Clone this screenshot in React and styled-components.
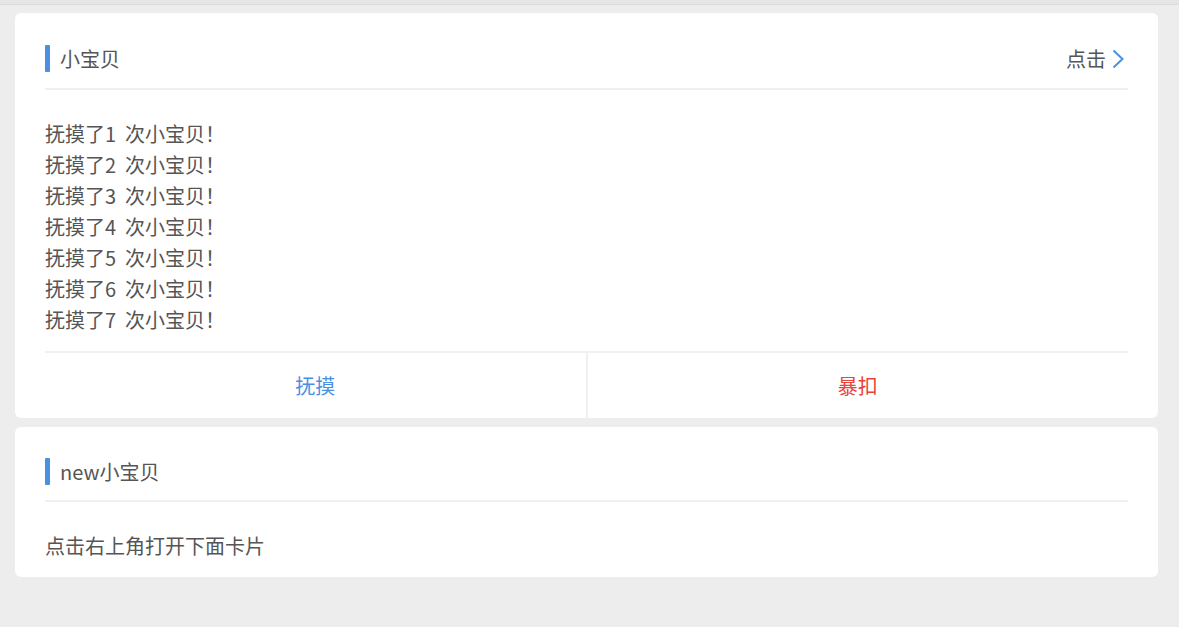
import React, { useState } from "react";
import styled, { createGlobalStyle } from "styled-components";

const GlobalStyle = createGlobalStyle`
  html, body {
    margin: 0;
    padding: 0;
    background: #ededed;
  }
  body {
    font-family: "Noto Sans CJK SC", "Noto Sans", sans-serif;
    color: #555;
  }
`;

// 페이지 전체
const Page = styled.div`
  min-height: 627px;
  box-sizing: border-box;
  border-top: 4px solid #e6e6e6;
  box-shadow: inset 0 1px 0 #dcdcdc;
  padding: 9px 21px 0 15px;
  display: flex;
  flex-direction: column;
  gap: 9px;
`;

const Card = styled.div`
  background: #fff;
  border-radius: 6px;
  padding: 0 30px;
`;

const CardHeader = styled.div`
  display: flex;
  align-items: center;
  justify-content: space-between;
  padding: 31px 0 15px;
  border-bottom: 2px solid #f0f0f0;
`;

const Title = styled.div`
  display: flex;
  align-items: center;
  height: 27px;
  font-size: 20px;
  color: #555;

  &::before {
    content: "";
    width: 5px;
    height: 27px;
    margin-right: 10px;
    border-radius: 1px;
    background: #4a90e2;
  }
`;

const MoreLink = styled.button`
  display: flex;
  align-items: center;
  gap: 6px;
  padding: 0 4px 0 0;
  border: none;
  background: none;
  font: inherit;
  font-size: 20px;
  color: #555;
  cursor: pointer;
`;

const Body = styled.div`
  padding: 28px 0 16px;
  font-size: 20px;
  line-height: 31px;
  color: #555;
`;

const Line = styled.div`
  white-space: pre;
`;

const Actions = styled.div`
  display: grid;
  grid-template-columns: 1fr 2px 1fr;
  border-top: 2px solid #f0f0f0;
  height: 65px;
`;

const Sep = styled.div`
  background: #f0f0f0;
`;

const ActionButton = styled.button`
  border: none;
  background: none;
  font: inherit;
  font-size: 20px;
  color: ${({ danger }) => (danger ? "#e8443a" : "#4a90e2")};
  cursor: pointer;
`;

const Chevron = () => (
  <svg width="12" height="20" viewBox="0 0 12 20" fill="none">
    <path d="M1.5 1.5L10.5 10L1.5 18.5" stroke="#4a90e2" strokeWidth="2" />
  </svg>
);

const App = () => {
  const [count, setCount] = useState(7); // 抚摸 횟수

  return (
    <>
      <GlobalStyle />
      <Page>
        <Card>
          <CardHeader>
            <Title>小宝贝</Title>
            <MoreLink>
              点击
              <Chevron />
            </MoreLink>
          </CardHeader>
          <Body>
            {Array.from({ length: count }, (_, i) => (
              <Line key={i}>抚摸了{i + 1}  次小宝贝！</Line>
            ))}
          </Body>
          <Actions>
            <ActionButton onClick={() => setCount((c) => c + 1)}>抚摸</ActionButton>
            <Sep />
            <ActionButton danger>暴扣</ActionButton>
          </Actions>
        </Card>
        <Card>
          <CardHeader>
            <Title>new小宝贝</Title>
          </CardHeader>
          <Body>点击右上角打开下面卡片</Body>
        </Card>
      </Page>
    </>
  );
};

export default App;
